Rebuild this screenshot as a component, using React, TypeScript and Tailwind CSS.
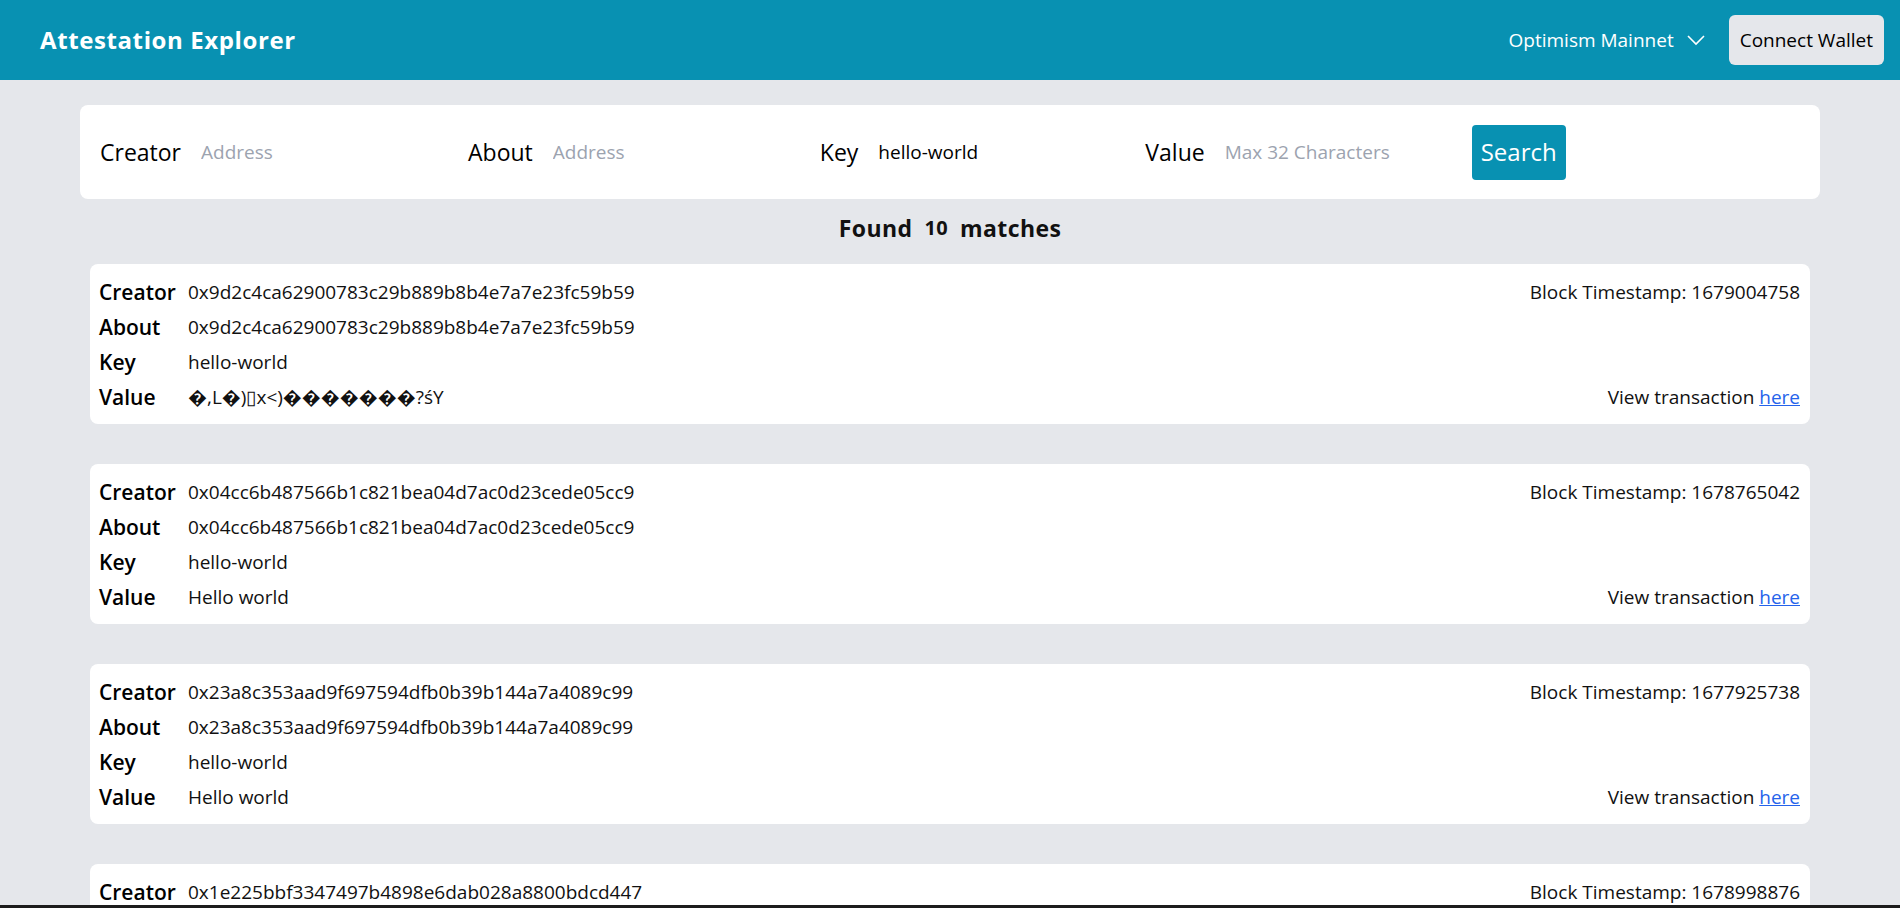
import React from "react";

type Att = {
  creator: string;
  about: string;
  key: string;
  value: string;
  ts: string;
};

const data: Att[] = [
  {
    creator: "0x9d2c4ca62900783c29b889b8b4e7a7e23fc59b59",
    about: "0x9d2c4ca62900783c29b889b8b4e7a7e23fc59b59",
    key: "hello-world",
    value: "\uFFFD,L\uFFFD)\u25AFx<)\uFFFD\uFFFD\uFFFD\uFFFD\uFFFD\uFFFD\uFFFD?\u015BY",
    ts: "1679004758",
  },
  {
    creator: "0x04cc6b487566b1c821bea04d7ac0d23cede05cc9",
    about: "0x04cc6b487566b1c821bea04d7ac0d23cede05cc9",
    key: "hello-world",
    value: "Hello world",
    ts: "1678765042",
  },
  {
    creator: "0x23a8c353aad9f697594dfb0b39b144a7a4089c99",
    about: "0x23a8c353aad9f697594dfb0b39b144a7a4089c99",
    key: "hello-world",
    value: "Hello world",
    ts: "1677925738",
  },
  {
    creator: "0x1e225bbf3347497b4898e6dab028a8800bdcd447",
    about: "0x1e225bbf3347497b4898e6dab028a8800bdcd447",
    key: "hello-world",
    value: "Hello world",
    ts: "1678998876",
  },
];

function Field({
  label,
  placeholder,
  value,
}: {
  label: string;
  placeholder: string;
  value?: string;
}) {
  return (
    <div className="flex items-center mr-10">
      <span className="text-[23px] text-black">{label}</span>
      <input
        className="ml-5 w-[227px] text-[19px] text-black placeholder:text-[#9ca3af] outline-none bg-transparent"
        placeholder={placeholder}
        defaultValue={value}
      />
    </div>
  );
}

function Row({
  label,
  value,
  right,
}: {
  label: string;
  value: string;
  right?: React.ReactNode;
}) {
  return (
    <div className="flex items-center h-[35px]">
      <span className="w-[89px] shrink-0 text-[21px] font-semibold text-black">{label}</span>
      <span className="text-[19px] text-[#111]">{value}</span>
      <div className="ml-auto text-[19px] text-[#111]">{right}</div>
    </div>
  );
}

function Card({ a }: { a: Att }) {
  return (
    <div className="h-[160px] shrink-0 bg-white rounded-lg pl-[9px] pr-[10px] pt-[11px]">
      <Row label="Creator" value={a.creator} right={<span>Block Timestamp: {a.ts}</span>} />
      <Row label="About" value={a.about} />
      <Row label="Key" value={a.key} />
      <Row
        label="Value"
        value={a.value}
        right={
          <span>
            View transaction{" "}
            <a href="#" className="text-[#2563eb] underline">
              here
            </a>
          </span>
        }
      />
    </div>
  );
}

export default function App() {
  return (
    <div className="min-h-screen bg-[#e5e7eb] font-['Open_Sans',sans-serif]">
      <header className="h-20 bg-[#0891b2] flex items-center justify-between pl-10 pr-4">
        <h1 className="text-2xl font-bold tracking-wide text-white">Attestation Explorer</h1>
        <div className="flex items-center">
          <button className="flex items-center text-[19px] text-white">
            Optimism Mainnet
            <svg className="ml-[13px]" width="18" height="12" viewBox="0 0 18 12" fill="none">
              <polyline points="1,2 9,10 17,2" stroke="white" strokeWidth="1.6" />
            </svg>
          </button>
          <button className="ml-6 h-[50px] px-[11px] rounded-md bg-[#e5e7eb] text-[19px] text-black">
            Connect Wallet
          </button>
        </div>
      </header>
      <main className="px-20 pt-[25px]">
        <div className="h-[94px] bg-white rounded-lg flex items-center pl-5">
          <Field label="Creator" placeholder="Address" />
          <Field label="About" placeholder="Address" />
          <Field label="Key" placeholder="" value="hello-world" />
          <div className="flex items-center mr-5">
            <span className="text-[23px] text-black">Value</span>
            <input
              className="ml-5 w-[227px] text-[19px] text-black placeholder:text-[#9ca3af] outline-none bg-transparent"
              placeholder="Max 32 Characters"
            />
          </div>
          <button className="w-[94px] h-[55px] rounded bg-[#0891b2] text-white text-2xl">Search</button>
        </div>
        <div className="mt-[13px] mb-5 h-8 flex items-center justify-center gap-3 font-bold tracking-wide text-[#111]">
          <span className="text-[23px]">Found</span>
          <span className="text-[20px]">10</span>
          <span className="text-[23px]">matches</span>
        </div>
        <div className="px-2.5 flex flex-col gap-10">
          {data.map((a, i) => (
            <Card key={i} a={a} />
          ))}
        </div>
      </main>
      <div className="fixed left-0 right-0 bottom-0 h-[3px] bg-[#1c1c1c]" />
    </div>
  );
}
